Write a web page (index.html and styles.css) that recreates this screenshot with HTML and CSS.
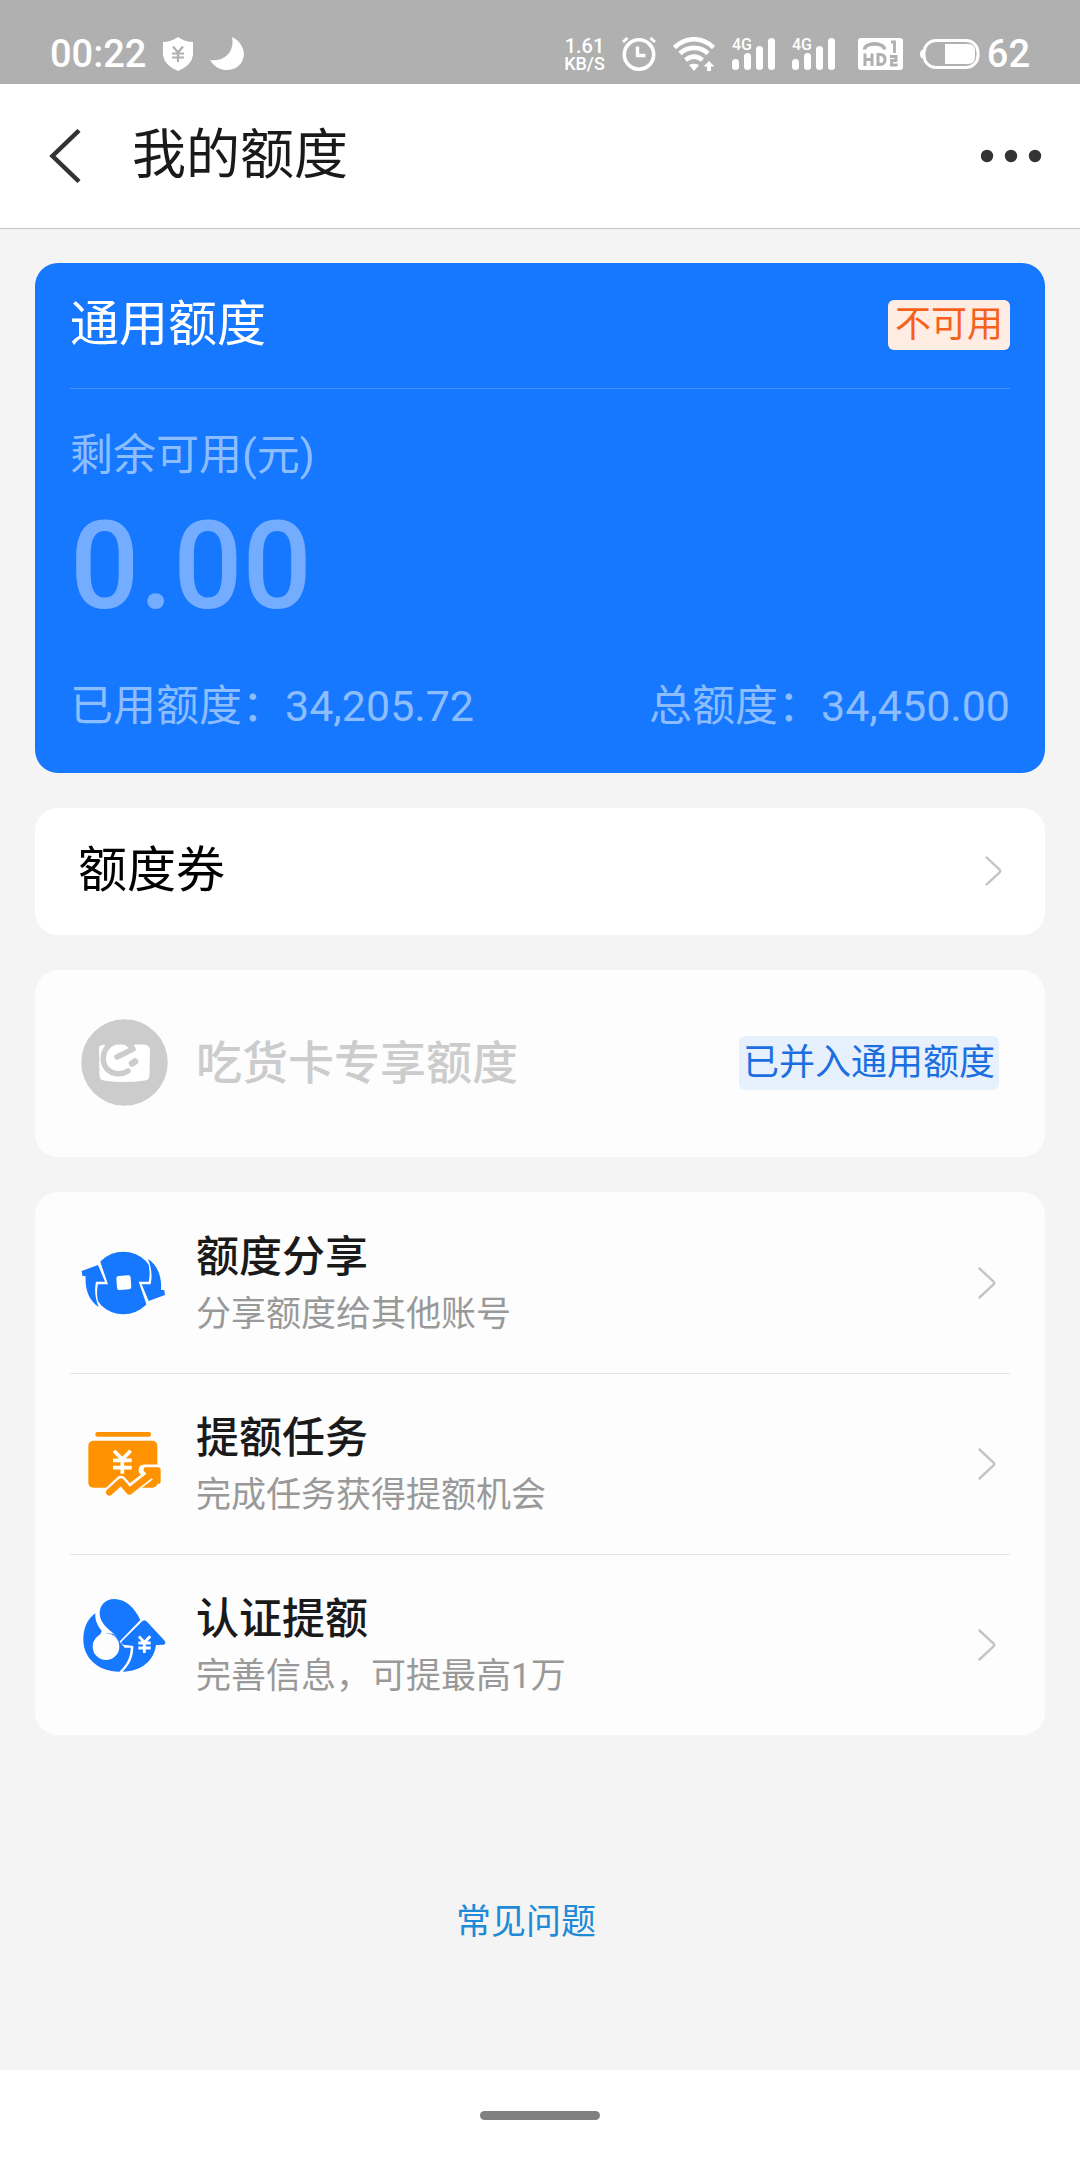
FILE: index.html
```html
<!DOCTYPE html>
<html lang="zh-CN">
<head>
<meta charset="utf-8">
<meta name="viewport" content="width=device-width">
<title>我的额度</title>
<link rel="stylesheet" href="styles.css">
</head>
<body>
<svg class="defs" aria-hidden="true">
  <symbol id="bars" viewBox="0 0 43 34">
    <rect x="0" y="22" width="7" height="11" rx="3.5"/>
    <rect x="12" y="16" width="7" height="17" rx="3.5"/>
    <rect x="24" y="9" width="7" height="24" rx="3.5"/>
    <rect x="36" y="1" width="7" height="32" rx="3.5"/>
  </symbol>
  <symbol id="chevron" viewBox="0 0 18 32">
    <path d="M1.500 1.500 15.500 14.500Q17 16 15.500 17.500L1.500 30.500" fill="none" stroke="#c4c4c4" stroke-width="2.400" stroke-linecap="round"/>
  </symbol>
</svg>

<div class="status">
  <div class="status-group">
    <span class="status-text">00:22</span>
    <svg width="30" height="34" viewBox="0 0 30 34" fill="#fff"><path d="M15 0Q22 5 30 5V18Q29 28 15 34 1 28 0 18V5Q8 5 15 0Z"/><path d="M10 9.500 15 15.500 20 9.500M15 15.500V25M9 16.500H21M9 20.500H21" fill="none" stroke="#b0b0b0" stroke-width="2.200"/></svg>
    <svg width="34" height="34" viewBox="0 0 34 34" fill="#fff"><path d="M22 0C31 4 36 14 33 22C29 35 9 38 0 23C15 25 25 14 22 0Z"/></svg>
  </div>
  <div class="status-group">
    <div class="speed"><span class="speed-value">1.61</span><span class="speed-unit">KB/S</span></div>
    <svg width="34" height="34" viewBox="0 0 34 34" fill="none" stroke="#fff"><circle cx="17" cy="17.500" r="14.700" stroke-width="3.600"/><path d="M15.500 9.500V18.500H23.500" stroke-width="3.400"/><path d="M1 5 5.500 1M33 5 28.500 1" stroke-width="3"/></svg>
    <svg width="42" height="34" viewBox="0 0 42 34" fill="none" stroke="#fff" stroke-width="4.600"><path d="M1.500 10.500C13-.5 29-.5 40.500 10.500M7 16.500C15 9 27 9 35 16.500M12.500 23C18 18.500 24 18.500 29.500 23"/><path d="M16 28Q21 25.500 26 28L21 34Z" fill="#fff" stroke="none"/><path d="M36 24 41.500 29.500H38V34H34V29.500H30.500Z" fill="#fff" stroke="none"/></svg>
    <svg width="43" height="34" viewBox="0 0 43 34" fill="#fff"><text class="network" x="0" y="13">4G</text><use href="#bars"/></svg>
    <svg width="43" height="34" viewBox="0 0 43 34" fill="#fff"><text class="network" x="0" y="13">4G</text><use href="#bars"/></svg>
    <svg class="volte" width="45" height="34" viewBox="0 0 45 34"><rect y="1" width="45" height="32" rx="3" fill="#fff"/><g fill="none" stroke="#b0b0b0" stroke-width="3"><path d="M6.500 12.500C7 5 26 5 26.500 12.500" stroke-width="3.600"/><path d="M7 16.500V29M14 16.500V29M7 22.500H14M20 17.500V27.500H22Q27 27.500 27 22.500 27 17.500 22 17.500Z"/><path d="M33 5H36.500V16M32 19.500H38V23.500H33.500V28H39.500" stroke-width="2.800"/></g></svg>
    <svg width="60" height="34" viewBox="0 0 60 34"><rect x="4" y="3.500" width="54" height="27" rx="12" fill="none" stroke="#fff" stroke-width="3"/><path d="M3 12.500Q0 13 0 17T3 21.500Z" fill="#fff"/><path d="M25 7H48Q55 7 55 14V20Q55 27 48 27H25Z" fill="#fff"/></svg>
    <span class="status-text battery">62</span>
  </div>
</div>

<header class="header">
  <button class="icon-button" type="button" aria-label="返回"><svg width="33" height="54" viewBox="0 0 33 54"><path d="M31 1.500 4.500 27 31 52.500" fill="none" stroke="#333" stroke-width="4.500"/></svg></button>
  <h1 class="header-title">我的额度</h1>
  <button class="icon-button" type="button" aria-label="更多"><svg width="61" height="14" viewBox="0 0 61 14" fill="#333"><circle cx="6" cy="7" r="6.200"/><circle cx="30" cy="7" r="6.200"/><circle cx="54" cy="7" r="6.200"/></svg></button>
</header>

<main class="content">
  <section class="quota">
    <div class="quota-head">
      <h2 class="quota-title">通用额度</h2>
      <span class="tag tag-warn">不可用</span>
    </div>
    <p class="quota-label">剩余可用(元)</p>
    <p class="quota-amount">0.00</p>
    <div class="quota-foot"><span>已用额度：34,205.72</span><span>总额度：34,450.00</span></div>
  </section>

  <a class="card coupon" href="#">
    <span>额度券</span>
    <svg width="17" height="30"><use href="#chevron"/></svg>
  </a>

  <section class="card merged">
    <svg width="87" height="87" viewBox="0 0 87 87"><circle cx="43.500" cy="43.500" r="43.300" fill="#ccc"/><path d="M18 28Q19 25.500 25 25.500L62 25.500Q69 26 69 31L68.500 57Q68 61 64 61.500 43 64.500 23 61.500 19 61 18.500 57Z" fill="#fff"/><path d="M24 26C30 17 46 16 53 26" fill="none" stroke="#ccc" stroke-width="7"/><path d="M36 38 52 30C47 22 37 20 30 25 21 31 20 43 26 50 32 56 41 56 47 52" fill="none" stroke="#ccc" stroke-width="5.500" stroke-linecap="round" stroke-linejoin="round"/><path d="M51 44.500 54 42.500" stroke="#ccc" stroke-width="6.500" stroke-linecap="round"/></svg>
    <h2 class="merged-title">吃货卡专享额度</h2>
    <span class="tag tag-info">已并入通用额度</span>
  </section>

  <nav class="card menu">
    <a class="menu-item" href="#">
      <svg class="menu-icon" viewBox="33 31 258 258"><circle cx="160" cy="160" r="94" fill="#1677ff"/><g id="coin-arrow"><path d="M50 80 91 97 114 164 84 164Q76 195 90 240L60 225 40 140Z" fill="#fdfdfd"/><path d="M35 124 84 106 105 156 78 156C72 185 77 210 86 232 58 214 44 180 47 140L37 138Z" fill="#1677ff"/></g><use href="#coin-arrow" transform="rotate(180 160 160)"/><rect x="140" y="138" width="43" height="42" rx="7" fill="#fff" transform="rotate(-4 161 159)"/></svg>
      <div class="menu-text"><h3 class="menu-title">额度分享</h3><p class="menu-note">分享额度给其他账号</p></div>
      <svg width="18" height="32"><use href="#chevron"/></svg>
    </a>
    <a class="menu-item" href="#">
      <svg class="menu-icon" viewBox="33 31 258 258"><g fill="#ff9200"><rect x="76" y="64" width="167" height="14" rx="6"/><rect x="55" y="90" width="207" height="141" rx="15"/></g><path d="M132 120 157 146 182 120M157 144V189M129 149H185M129 171H185" fill="none" stroke="#fff" stroke-width="11"/><g fill="none" stroke-linejoin="round" stroke-linecap="round"><path d="M118 245 153 212 178 240 240 192M222 178H262" stroke="#fdfdfd" stroke-width="33"/><path d="M118 245 153 213 178 242 250 186" stroke="#ff9200" stroke-width="20"/></g><path d="M224 170H264Q272 170 272 178V213Q272 220 265 220 258 220 256 213L224 184Q217 177 224 170Z" fill="#ff9200"/></svg>
      <div class="menu-text"><h3 class="menu-title">提额任务</h3><p class="menu-note">完成任务获得提额机会</p></div>
      <svg width="18" height="32"><use href="#chevron"/></svg>
    </a>
    <a class="menu-item" href="#">
      <svg class="menu-icon" viewBox="33 64 258 258"><g fill="#1677ff"><path d="M76 98C50 116 40 145 40 178 40 232 85 273 148 273 172 250 182 228 182 201H164L130 160 100 155C84 140 74 120 76 98Z"/><path d="M211 118C194 80 165 55 133 55 104 55 88 76 89 100 91 128 112 142 132 160L148 183Z"/><path d="M215 123Q223 114 231 123L284 180Q290 190 280 192L258 193C252 240 215 272 158 273 180 250 190 230 190 196L160 192Q150 189 156 182Z"/></g><path d="M83 94C80 125 92 142 108 158" fill="none" stroke="#fdfdfd" stroke-width="8"/><circle cx="108" cy="198" r="40" fill="#fdfdfd"/><path d="M96 148Q108 162 128 166L112 180 88 168Z" fill="#fdfdfd"/><path d="M207 167 223 185 241 167M223 184V217M205 187H242M205 202H242" fill="none" stroke="#fff" stroke-width="8.500"/></svg>
      <div class="menu-text"><h3 class="menu-title">认证提额</h3><p class="menu-note">完善信息，可提最高1万</p></div>
      <svg width="18" height="32"><use href="#chevron"/></svg>
    </a>
  </nav>

  <a class="faq" href="#">常见问题</a>
</main>

<footer class="gesture"><div class="gesture-bar"></div></footer>
</body>
</html>
```

FILE: styles.css
```css
* {
  box-sizing: border-box;
  margin: 0;
}

body {
  display: flex;
  flex-direction: column;
  min-height: 100vh;
  background: #f4f4f4;
  color: #1a1a1a;
  font-family: Roboto, "Noto Sans CJK SC", sans-serif;
}

a {
  color: inherit;
  text-decoration: none;
}

svg {
  flex: none;
}

.defs {
  position: absolute;
  width: 0;
  height: 0;
}

/* Status bar */
.status {
  display: flex;
  justify-content: space-between;
  height: 84px;
  padding: 24px 50px 0;
  background: #b0b0b0;
  color: #fff;
}

.status-group {
  display: flex;
  align-items: center;
  gap: 17px;
}

.status-text {
  font-size: 38px;
  font-weight: 500;
  line-height: 48px;
}

.battery {
  margin-left: -10px;
}

.volte {
  margin-left: 6px;
}

.network {
  font-size: 16px;
  font-weight: 500;
}

.speed {
  display: flex;
  flex-direction: column;
  align-items: center;
  padding-top: 2px;
  font-weight: 500;
  line-height: 17px;
}

.speed-value {
  font-size: 20px;
}

.speed-unit {
  font-size: 18px;
}

/* Title bar */
.header {
  display: flex;
  align-items: center;
  height: 145px;
  padding: 0 38px 0 48px;
  background: #fff;
  border-bottom: 1px solid #c4c4c4;
}

.header-title {
  flex: 1;
  padding-left: 51px;
  font-size: 54px;
  font-weight: 400;
  line-height: 72px;
}

.icon-button {
  display: flex;
  padding: 0;
  border: 0;
  background: none;
}

.content {
  display: flex;
  flex: 1;
  flex-direction: column;
  gap: 35px;
  padding: 34px 35px;
}

.tag {
  border-radius: 6px;
  font-size: 36px;
}

.tag-warn {
  padding: 0 7px;
  background: #ffece3;
  color: #f5601a;
  line-height: 50px;
}

.tag-info {
  padding: 0 4px;
  background: #e7f0fd;
  color: #1b6fe0;
  line-height: 54px;
}

/* Main quota card */
.quota {
  padding: 0 35px 37px;
  border-radius: 23px;
  background: #1677ff;
  color: #8cbdff;
  font-size: 43px;
  line-height: 60px;
}

.quota-head {
  display: flex;
  align-items: center;
  justify-content: space-between;
  height: 126px;
  padding-bottom: 2px;
  border-bottom: 1px solid #4592ff;
}

.quota-title {
  color: #fff;
  font-size: 49px;
  font-weight: 400;
}

.quota-label {
  padding-top: 36px;
}

.quota-amount {
  color: #74adff;
  font-size: 122px;
  font-weight: 500;
  line-height: 164px;
}

.quota-foot {
  display: flex;
  justify-content: space-between;
  padding-top: 27px;
}

/* White cards */
.card {
  border-radius: 23px;
  background: #fdfdfd;
}

.coupon {
  display: flex;
  align-items: center;
  justify-content: space-between;
  padding: 30px 43px 32px;
  background: #fff;
  color: #000;
  font-size: 49px;
  line-height: 65px;
}

.merged {
  display: flex;
  align-items: center;
  padding: 49px 46px 51px;
}

.merged-title {
  flex: 1;
  padding-left: 28px;
  color: #ccc;
  font-size: 46px;
  font-weight: 500;
  line-height: 60px;
}

.menu {
  padding: 0 35px;
}

.menu-item {
  display: flex;
  align-items: center;
  height: 181px;
  padding: 0 14px 0 11px;
}

.menu-item + .menu-item {
  border-top: 1px solid #e5e5e5;
}

.menu-icon {
  width: 86px;
  height: 86px;
  overflow: visible;
}

.menu-text {
  flex: 1;
  padding: 4px 0 0 29px;
}

.menu-title {
  font-size: 43px;
  font-weight: 500;
  line-height: 60px;
}

.menu-note {
  color: #999;
  font-size: 35px;
  line-height: 56px;
}

.faq {
  align-self: center;
  margin: 128px 28px 0 0;
  color: #1f8ad6;
  font-size: 35px;
  line-height: 50px;
}

.gesture {
  display: flex;
  align-items: center;
  justify-content: center;
  height: 90px;
  background: #fff;
}

.gesture-bar {
  width: 120px;
  height: 9px;
  border-radius: 5px;
  background: #808080;
}
```
